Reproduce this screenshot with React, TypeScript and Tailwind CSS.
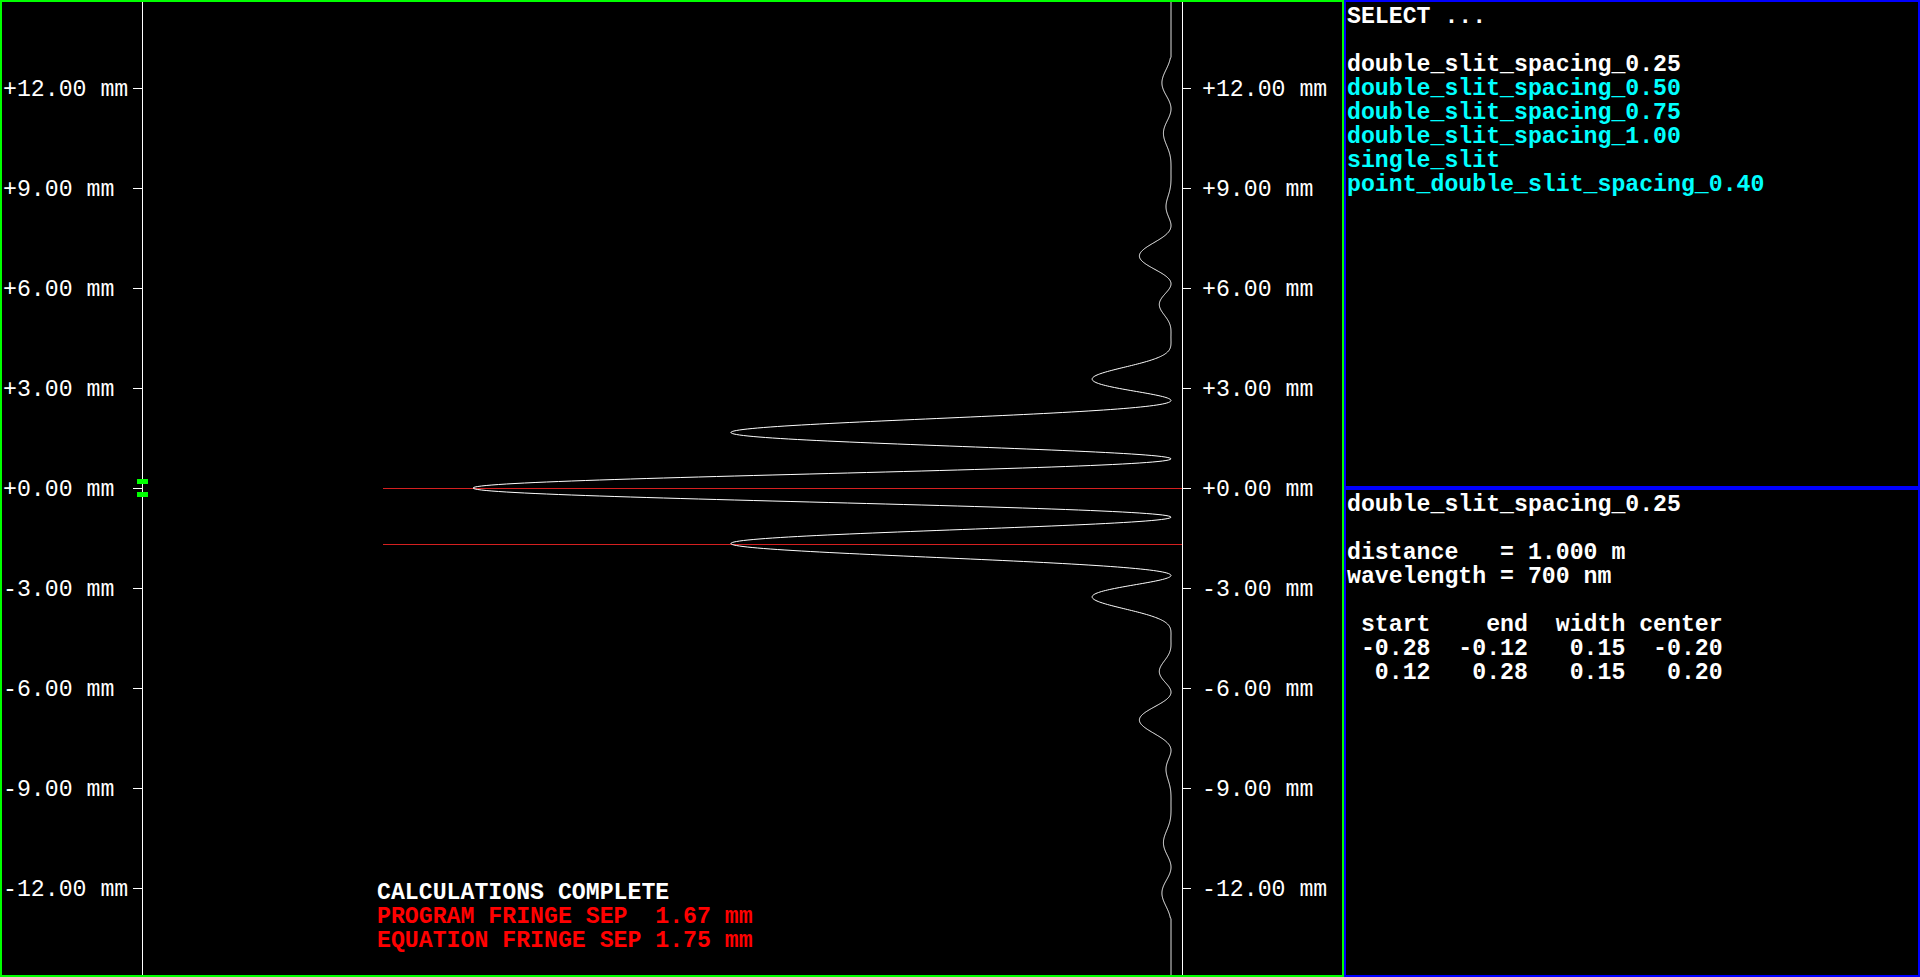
import { useMemo } from "react";

const MONO = "font-['Liberation_Mono','Courier_New',monospace]";

// plot scale: 100px per 3 mm, zero at y=488 (page coords)
const PX_PER_MM = 100 / 3;
const ZERO_Y = 488;
const BASE_X = 1171;
const AMP = 698;

const TICKS = [12, 9, 6, 3, 0, -3, -6, -9, -12];

const SLITS = [
  "double_slit_spacing_0.25",
  "double_slit_spacing_0.50",
  "double_slit_spacing_0.75",
  "double_slit_spacing_1.00",
  "single_slit",
  "point_double_slit_spacing_0.40",
];

function intensity(mm: number) {
  if (Math.abs(mm) > 12.9) return 0;
  const a = (Math.PI * mm) / 1.75;
  const b = (Math.PI * mm) / 4.667;
  const sinc = b === 0 ? 1 : Math.sin(b) / b;
  return Math.cos(a) ** 2 * sinc * sinc;
}

function fmtTick(v: number) {
  return (v < 0 ? "-" : "+") + Math.abs(v).toFixed(2) + " mm";
}

function FringePlot() {
  const points = useMemo(() => {
    const pts: string[] = [];
    for (let y = 2; y <= 975; y += 0.5) {
      const mm = (ZERO_Y - y) / PX_PER_MM;
      const x = BASE_X - AMP * intensity(mm);
      pts.push(`${x.toFixed(2)},${y}`);
    }
    return pts.join(" ");
  }, []);

  const sepY = ZERO_Y + 1.68 * PX_PER_MM;

  return (
    <svg width={1340} height={973} viewBox="2 2 1340 973" className="block">
      <line x1={142.5} y1={2} x2={142.5} y2={975} stroke="#fff" strokeWidth={1} />
      <line x1={1182.5} y1={2} x2={1182.5} y2={975} stroke="#fff" strokeWidth={1} />

      {TICKS.map((t) => {
        const y = ZERO_Y - t * PX_PER_MM + 0.5;
        return (
          <g key={t}>
            <line x1={133} y1={y} x2={142} y2={y} stroke="#fff" strokeWidth={1} />
            <line x1={1182} y1={y} x2={1191} y2={y} stroke="#fff" strokeWidth={1} />
            <text x={3} y={y + 7.5} fill="#fff" fontSize={23.2} fontFamily="'Liberation Mono', 'Courier New', monospace">
              {fmtTick(t)}
            </text>
            <text x={1202} y={y + 7.5} fill="#fff" fontSize={23.2} fontFamily="'Liberation Mono', 'Courier New', monospace">
              {fmtTick(t)}
            </text>
          </g>
        );
      })}

      <line x1={383} y1={ZERO_Y + 0.5} x2={1182} y2={ZERO_Y + 0.5} stroke="#d42020" strokeWidth={1} />
      <line x1={383} y1={Math.round(sepY) + 0.5} x2={1182} y2={Math.round(sepY) + 0.5} stroke="#d42020" strokeWidth={1} />

      <polyline points={points} fill="none" stroke="#fff" strokeWidth={1} />

      <rect x={137} y={479} width={11} height={5} fill="#00ff00" />
      <rect x={137} y={492} width={11} height={5} fill="#00ff00" />
    </svg>
  );
}

export default function App() {
  return (
    <div className={`flex h-[977px] w-[1920px] overflow-hidden bg-black ${MONO}`}>
      <div className="relative h-full w-[1344px] shrink-0 border-2 border-[#00ff00]">
        <FringePlot />
        <div className="absolute left-[375px] top-[879px] whitespace-pre text-[23.2px] font-bold leading-[24px]">
          <div className="text-white">CALCULATIONS COMPLETE</div>
          <div className="text-[#ff0000]">PROGRAM FRINGE SEP  1.67 mm</div>
          <div className="text-[#ff0000]">EQUATION FRINGE SEP 1.75 mm</div>
        </div>
      </div>

      <div className="flex h-full w-[576px] flex-col">
        <div className="h-[488px] shrink-0 border-2 border-[#0000ff] pl-px pt-[3px] text-[23.2px] font-bold leading-[24px]">
          <div className="text-white">SELECT ...</div>
          <div className="h-6" />
          {SLITS.map((s, i) => (
            <div key={s} className={i === 0 ? "text-white" : "text-[#00ffff]"}>
              {s}
            </div>
          ))}
        </div>
        <div className="flex-1 whitespace-pre border-2 border-[#0000ff] pl-px pt-[3px] text-[23.2px] font-bold leading-[24px] text-white">
          <div>double_slit_spacing_0.25</div>
          <div className="h-6" />
          <div>distance   = 1.000 m</div>
          <div>wavelength = 700 nm</div>
          <div className="h-6" />
          <div> start    end  width center</div>
          <div> -0.28  -0.12   0.15  -0.20</div>
          <div>  0.12   0.28   0.15   0.20</div>
        </div>
      </div>
    </div>
  );
}
